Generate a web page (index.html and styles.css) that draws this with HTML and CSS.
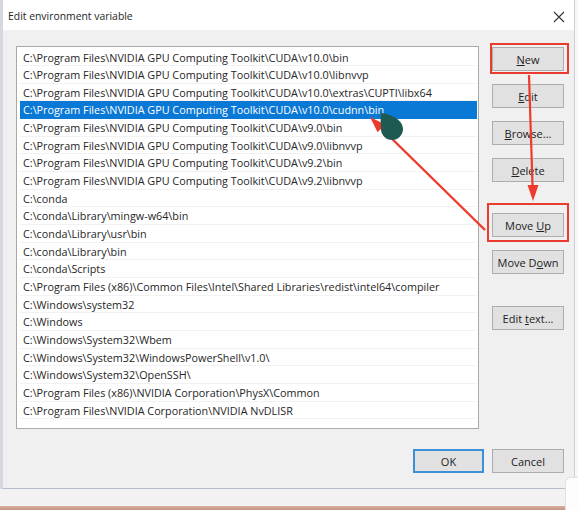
FILE: index.html
```html
<!DOCTYPE html>
<html>
<head>
<meta charset="utf-8">
<link rel="stylesheet" href="styles.css">
</head>
<body>
<div class="screen">
  <div class="window">
    <div class="titlebar">
      <span class="title">Edit environment variable</span>
      <svg class="close" width="12" height="12" viewBox="0 0 12 12"><path d="M1 1 L11 11 M11 1 L1 11" stroke="#333" stroke-width="1.1" fill="none"/></svg>
    </div>
    <div class="content">
      <div class="main">
        <div class="list">
          <div class="row">C:\Program Files\NVIDIA GPU Computing Toolkit\CUDA\v10.0\bin</div>
          <div class="row">C:\Program Files\NVIDIA GPU Computing Toolkit\CUDA\v10.0\libnvvp</div>
          <div class="row">C:\Program Files\NVIDIA GPU Computing Toolkit\CUDA\v10.0\extras\CUPTI\libx64</div>
          <div class="row selected">C:\Program Files\NVIDIA GPU Computing Toolkit\CUDA\v10.0\cudnn\bin</div>
          <div class="row">C:\Program Files\NVIDIA GPU Computing Toolkit\CUDA\v9.0\bin</div>
          <div class="row">C:\Program Files\NVIDIA GPU Computing Toolkit\CUDA\v9.0\libnvvp</div>
          <div class="row">C:\Program Files\NVIDIA GPU Computing Toolkit\CUDA\v9.2\bin</div>
          <div class="row">C:\Program Files\NVIDIA GPU Computing Toolkit\CUDA\v9.2\libnvvp</div>
          <div class="row">C:\conda</div>
          <div class="row">C:\conda\Library\mingw-w64\bin</div>
          <div class="row">C:\conda\Library\usr\bin</div>
          <div class="row">C:\conda\Library\bin</div>
          <div class="row">C:\conda\Scripts</div>
          <div class="row">C:\Program Files (x86)\Common Files\Intel\Shared Libraries\redist\intel64\compiler</div>
          <div class="row">C:\Windows\system32</div>
          <div class="row">C:\Windows</div>
          <div class="row">C:\Windows\System32\Wbem</div>
          <div class="row">C:\Windows\System32\WindowsPowerShell\v1.0\</div>
          <div class="row">C:\Windows\System32\OpenSSH\</div>
          <div class="row">C:\Program Files (x86)\NVIDIA Corporation\PhysX\Common</div>
          <div class="row">C:\Program Files\NVIDIA Corporation\NVIDIA NvDLISR</div>
        </div>
        <div class="buttons">
          <button class="btn"><u>N</u>ew</button>
          <button class="btn"><u>E</u>dit</button>
          <button class="btn"><u>B</u>rowse...</button>
          <button class="btn"><u>D</u>elete</button>
          <button class="btn group">Move <u>U</u>p</button>
          <button class="btn">Move D<u>o</u>wn</button>
          <button class="btn group2">Edit <u>t</u>ext...</button>
        </div>
      </div>
      <div class="footer">
        <button class="btn ok">OK</button>
        <button class="btn cancel">Cancel</button>
      </div>
    </div>
  </div>
  <div class="below"></div>
  <div class="taskbar"></div>

  <div class="corner"></div>
  <div class="mark mark-new"></div>
  <div class="mark mark-up"></div>
  <svg class="annot" width="578" height="510" viewBox="0 0 578 510">
    <g fill="#ee3a2c" stroke="#ee3a2c">
      <line x1="529" y1="75" x2="532.6" y2="188" stroke-width="2.2"/>
      <polygon points="533,201 527.5,185 538.5,185" stroke="none"/>
      <line x1="381" y1="128" x2="485" y2="230" stroke-width="2.4"/>
      <polygon points="370,117 377.6,132.2 385.2,124.6" stroke="none"/>
    </g>
    <path d="M381 113 C391 114 403 120 403 129 A11 11 0 0 1 381 129 C381 123 380 118 381 113 Z" fill="#1f5a50"/>
  </svg>
</div>
</body>
</html>
```

FILE: styles.css
```css
* { box-sizing: border-box; }
html, body { margin: 0; padding: 0; background: #ffffff; }
body {
  width: 578px;
  height: 510px;
  overflow: hidden;
  font-family: "Open Sans", "Noto Sans", sans-serif;
  color: #222;
}
.screen {
  position: relative;
  width: 578px;
  height: 510px;
  background: #f7f7f7;
}
.window {
  width: 575px;
  border-left: 3px solid #d3d9df;
  border-right: 1px solid #c9d0d8;
  background: #f0f0f0;
}
.titlebar {
  height: 30px;
  background: #ffffff;
  display: flex;
  align-items: center;
  justify-content: space-between;
  padding: 1px 9px 0 5px;
}
.title {
  font-size: 10.4px;
  color: #1e1e1e;
}
.close { display: block; margin-top: 2px; }
.content {
  height: 459px;
  padding: 16px 10px 0 13px;
  border-bottom: 1px solid #b5bec8;
}
.main {
  display: flex;
  gap: 13px;
}
.list {
  width: 463px;
  height: 383px;
  background: #fff;
  border: 1px solid #a9a9a9;
  padding: 1.5px 1px 0 3px;
}
.row {
  height: 17.67px;
  line-height: 17px;
  padding-left: 3px;
  font-size: 10.8px;
  color: #262626;
  white-space: nowrap;
  border-bottom: 1px solid #f2f2f2;
}
.row.selected {
  background: #0a78d5;
  color: #fff;
  border-bottom-color: #0a78d5;
}
.buttons {
  display: flex;
  flex-direction: column;
  gap: 13px;
  padding-top: 1px;
  width: 72px;
}
.btn {
  width: 72px;
  height: 24px;
  background: #e1e1e1;
  border: 1px solid #adadad;
  font-family: "Open Sans", "Noto Sans", sans-serif;
  font-size: 11px;
  color: #222;
  padding: 0;
  margin: 0;
}
.btn.group { margin-top: 18px; }
.btn.group2 { margin-top: 19px; }
.footer {
  display: flex;
  justify-content: flex-end;
  gap: 8px;
  margin-top: 20px;
}
.btn.ok {
  width: 71px;
  border: 2px solid #3d8fd9;
}
.below {
  height: 17px;
  background: #f2f2f2;
}
.taskbar {
  height: 4px;
  background: linear-gradient(#d9b2a2, #c49381);
}
.corner {
  position: absolute;
  left: 565px;
  top: 477px;
  width: 13px;
  height: 33px;
  background: #fdfdfd;
  border-top-left-radius: 6px;
  border-left: 1px solid #e2e2e2;
  border-top: 1px solid #e2e2e2;
}
.mark {
  position: absolute;
  border: 2px solid #ea3b2f;
}
.mark-new { left: 490px; top: 43px; width: 79px; height: 31px; }
.mark-up { left: 487px; top: 203px; width: 82px; height: 39px; }
.annot {
  position: absolute;
  left: 0;
  top: 0;
}
```
